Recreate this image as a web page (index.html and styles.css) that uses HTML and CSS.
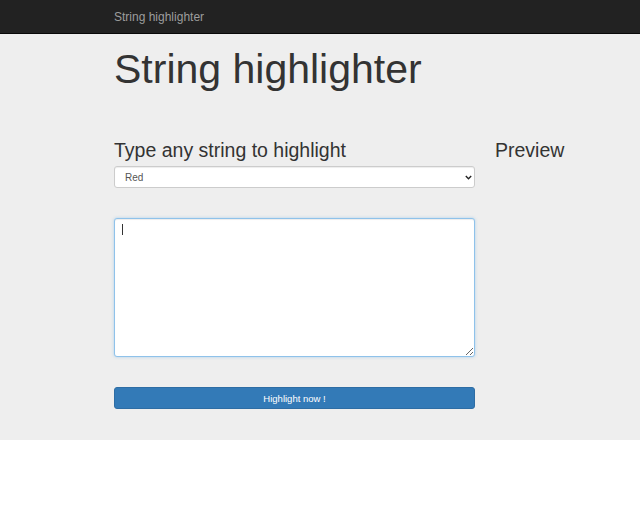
FILE: index.html
```html
<!DOCTYPE html>
<html>
<head>
<meta charset="utf-8">
<title>String highlighter</title>
<link rel="stylesheet" href="styles.css">
</head>
<body>
<nav class="navbar">
  <div class="container">
    <a class="brand">String highlighter</a>
  </div>
</nav>
<main class="jumbo">
  <div class="container">
    <h1 class="title">String highlighter</h1>
    <div class="row">
      <div class="col-main">
        <h3 class="subtitle">Type any string to highlight</h3>
        <div class="select-wrap">
          <select class="control select">
            <option>Red</option>
            <option>Green</option>
            <option>Blue</option>
          </select>
          <svg class="chev" width="7" height="5" viewBox="0 0 7 5"><path d="M0.8 1 L3.5 3.7 L6.2 1" fill="none" stroke="#222" stroke-width="1.4"/></svg>
        </div>
        <div class="area-wrap">
          <textarea class="control area"></textarea>
          <span class="caret"></span>
        </div>
        <button class="btn">Highlight now !</button>
      </div>
      <div class="col-side">
        <h3 class="subtitle">Preview</h3>
      </div>
    </div>
  </div>
</main>
</body>
</html>
```
FILE: styles.css
```css
* { box-sizing: border-box; }
html, body { margin: 0; padding: 0; background: #fff; }
body { font-family: "Liberation Sans", Arial, sans-serif; color: #333; }

.container { width: 412px; margin: 0 auto; }

.navbar {
  height: 34px;
  background: #222;
  border-bottom: 1px solid #080808;
  display: flex;
  align-items: center;
}
.brand {
  color: #9d9d9d;
  font-size: 12px;
  line-height: 14px;
  display: block;
}

.jumbo {
  background: #eee;
  padding: 13px 0 31px;
}

.title {
  margin: 0;
  font-size: 41px;
  font-weight: 400;
  line-height: 45px;
  color: #333;
}

.row {
  display: flex;
  gap: 20px;
  margin-top: 47px;
}
.col-main { width: 361px; flex: none; }
.col-side { flex: 1; white-space: nowrap; }

.subtitle {
  margin: 0;
  font-size: 19.5px;
  font-weight: 400;
  line-height: 22px;
  color: #333;
}

.control {
  display: block;
  width: 100%;
  background: #fff;
  border: 1px solid #ccc;
  border-radius: 3px;
  font-family: "Liberation Sans", Arial, sans-serif;
  color: #555;
  box-shadow: inset 0 1px 1px rgba(0,0,0,0.075);
}

.select-wrap { position: relative; margin-top: 5px; }
.select {
  -webkit-appearance: none;
  appearance: none;
  height: 22px;
  padding: 0 10px;
  font-size: 10px;
  outline: none;
}
.chev { position: absolute; right: 3px; top: 9px; }

.area-wrap { position: relative; margin-top: 30px; }
.area {
  height: 139px;
  resize: vertical;
  border-color: #8fc2ea;
  outline: none;
  box-shadow: inset 0 1px 1px rgba(0,0,0,0.075), 0 0 3px rgba(102,175,233,0.5);
}
.caret {
  position: absolute;
  left: 8px;
  top: 6px;
  width: 1px;
  height: 11px;
  background: #333;
}

.btn {
  display: block;
  width: 100%;
  height: 22px;
  margin-top: 30px;
  background: #337ab7;
  border: 1px solid #2e6da4;
  border-radius: 3px;
  color: #fff;
  font-family: "Liberation Sans", Arial, sans-serif;
  font-size: 9.5px;
  padding: 0;
  cursor: pointer;
}
```
